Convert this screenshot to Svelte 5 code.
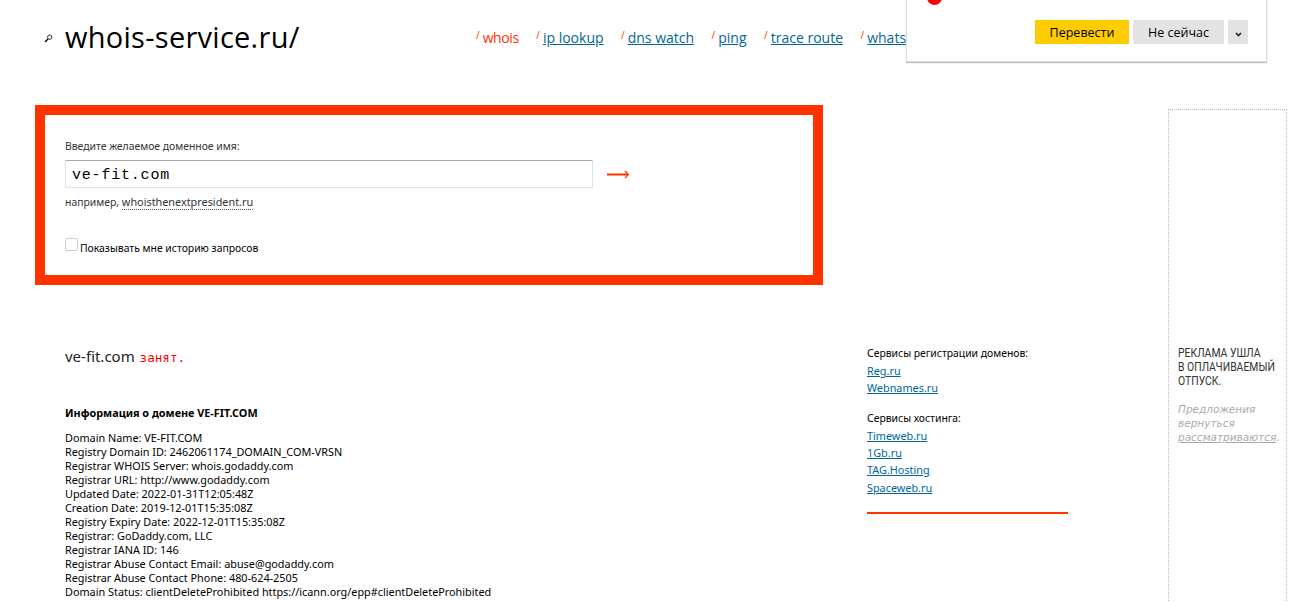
<script lang="ts">
	const nav = [
		{ label: 'whois', active: true },
		{ label: 'ip lookup' },
		{ label: 'dns watch' },
		{ label: 'ping' },
		{ label: 'trace route' },
		{ label: 'whatsmyip' }
	];

	const registrars = ['Reg.ru', 'Webnames.ru'];
	const hosting = ['Timeweb.ru', '1Gb.ru', 'TAG.Hosting', 'Spaceweb.ru'];

	const whois = [
		'Domain Name: VE-FIT.COM',
		'Registry Domain ID: 2462061174_DOMAIN_COM-VRSN',
		'Registrar WHOIS Server: whois.godaddy.com',
		'Registrar URL: http://www.godaddy.com',
		'Updated Date: 2022-01-31T12:05:48Z',
		'Creation Date: 2019-12-01T15:35:08Z',
		'Registry Expiry Date: 2022-12-01T15:35:08Z',
		'Registrar: GoDaddy.com, LLC',
		'Registrar IANA ID: 146',
		'Registrar Abuse Contact Email: abuse@godaddy.com',
		'Registrar Abuse Contact Phone: 480-624-2505',
		'Domain Status: clientDeleteProhibited https://icann.org/epp#clientDeleteProhibited'
	];
</script>

<div class="page">
	<header class="header">
		<svg class="lens" width="9" height="9" viewBox="0 0 9 9" aria-hidden="true">
			<circle cx="5.7" cy="3.2" r="2.2" fill="none" stroke="#333" stroke-width="1" />
			<path d="M4 5 L1 8" stroke="#000" stroke-width="1.4" />
		</svg>
		<div class="logo">whois-service.ru/</div>
		<nav class="nav">
			{#each nav as item}
				<span class="nav-item">
					<span class="tick">/</span>{#if item.active}<span class="current">{item.label}</span>{:else}<a href="#top">{item.label}</a>{/if}
				</span>
			{/each}
		</nav>
	</header>

	<div class="columns">
		<main class="left">
			<form class="search">
				<label class="field-label" for="domain">Введите желаемое доменное имя:</label>
				<div class="field-row">
					<input id="domain" class="domain" type="text" value="ve-fit.com" />
					<svg class="go" width="22" height="9" viewBox="0 0 22 9" aria-hidden="true">
						<path d="M0 4.5 H21" stroke="#ff3300" stroke-width="2" />
						<path d="M18 1 L21.5 4.5 L18 8" fill="none" stroke="#ff3300" stroke-width="1.2" />
					</svg>
				</div>
				<p class="hint"><span class="ru">например,</span> <span class="sample">whoisthenextpresident.ru</span></p>
				<label class="history"><span class="box"></span><span class="history-text">Показывать мне историю запросов</span></label>
			</form>

			<section class="result">
				<p class="status">ve-fit.com <span class="taken">занят.</span></p>
				<h4>Информация о домене VE-FIT.COM</h4>
				<div class="whois">
					{#each whois as line}
						<div>{line}</div>
					{/each}
				</div>
			</section>
		</main>

		<aside class="services">
			<p>Сервисы регистрации доменов:</p>
			{#each registrars as name}
				<a href="#top">{name}</a>
			{/each}
			<p class="second">Сервисы хостинга:</p>
			{#each hosting as name}
				<a href="#top">{name}</a>
			{/each}
			<hr />
		</aside>

		<aside class="ad">
			<div class="ad-title">РЕКЛАМА УШЛА<br />В ОПЛАЧИВАЕМЫЙ<br />ОТПУСК.</div>
			<div class="ad-note">Предложения вернуться <span class="ad-link">рассматриваются</span>.</div>
		</aside>
	</div>

	<div class="translate">
		<span class="dot"></span>
		<div class="actions">
			<button class="primary">Перевести</button>
			<button>Не сейчас</button>
			<button class="more" aria-label="Ещё">
				<svg width="7" height="5" viewBox="0 0 7 5"><path d="M1 1 L3.5 3.5 L6 1" fill="none" stroke="#222" stroke-width="1.6" /></svg>
			</button>
		</div>
	</div>
</div>

<style>
	:global(body) {
		overflow: hidden;
		background: #fff;
	}

	.page {
		position: relative;
		height: 602px;
		overflow: hidden;
		font-family: "Noto Sans", sans-serif;
		font-size: 10.85px;
		color: #000;
	}

	.header {
		display: flex;
		align-items: center;
		height: 73px;
		padding-left: 44px;
		white-space: nowrap;
	}

	.lens {
		margin: 4px 12px 0 0;
	}

	.logo {
		width: 411px;
		font-family: "Open Sans", sans-serif;
		font-size: 29px;
		letter-spacing: 0.27px;
		color: #000;
	}

	.nav {
		display: flex;
		gap: 17.5px;
		margin-top: 2px;
		font-size: 14px;
		font-family: "Open Sans", sans-serif;
	}

	.tick {
		margin-right: 3px;
		font-size: 10px;
		vertical-align: 4px;
		color: #ff3300;
	}

	.current {
		letter-spacing: -0.4px;
		color: #ff3300;
	}

	a {
		color: #006699;
	}

	.columns {
		display: flex;
		padding: 32px 0 0 35px;
	}

	.left {
		flex: none;
		width: 788px;
	}

	.search {
		box-sizing: border-box;
		height: 180px;
		padding: 21px 20px 0;
		border: 10px solid #ff3300;
		color: #333;
	}

	.field-label {
		display: block;
		height: 24px;
		font-size: 10.4px;
		line-height: 20px;
	}

	.field-row {
		display: flex;
		align-items: center;
		gap: 14px;
	}

	.domain {
		box-sizing: border-box;
		width: 528px;
		height: 28px;
		padding: 2px 6px 0;
		border: 1px solid #e2e2e2;
		border-top-color: #aaa;
		font-family: "Liberation Mono", monospace;
		font-size: 15px;
		letter-spacing: 0.8px;
		color: #000;
		outline: none;
	}

	.hint {
		margin: 7px 0 0;
		line-height: 14px;
	}

	.ru {
		font-size: 10.4px;
	}

	.sample {
		border-bottom: 1px dotted #555;
	}

	.history {
		display: flex;
		align-items: flex-start;
		margin-top: 29px;
		color: #000;
	}

	.history-text {
		margin-top: 3px;
		font-size: 10.4px;
		line-height: 14px;
	}

	.box {
		box-sizing: border-box;
		width: 13px;
		height: 13px;
		margin-right: 2px;
		border: 1px solid #ccc;
		border-radius: 2px;
	}

	.result {
		padding: 63px 0 0 30px;
	}

	.status {
		margin: 0;
		font-size: 15px;
		line-height: 16px;
		color: #222;
		word-spacing: 1px;
	}

	.taken {
		color: #ff0000;
		font-family: "DejaVu Sans Mono", monospace;
		font-size: 12.6px;
	}

	h4 {
		margin: 40px 0 11px;
		font-size: 10.85px;
		line-height: 14px;
	}

	.whois {
		line-height: 14px;
		white-space: nowrap;
	}

	.services {
		flex: none;
		display: flex;
		flex-direction: column;
		align-items: flex-start;
		width: 201px;
		margin: 241px 0 0 44px;
		line-height: 17.33px;
	}

	.services p {
		margin: 0 0 2px;
		font-size: 10.4px;
		line-height: 14px;
	}

	.services .second {
		margin: 14px 0 2px;
	}

	hr {
		align-self: stretch;
		height: 2px;
		margin: 16px 0 0;
		border: 0;
		background: #ff3300;
	}

	.ad {
		box-sizing: border-box;
		flex: none;
		width: 119px;
		height: 520px;
		margin: 4px 0 0 100px;
		padding: 236px 4px 0 9px;
		border: 1px dotted #bbb;
	}

	.ad-title {
		font-family: "Roboto", sans-serif;
		font-size: 13px;
		line-height: 14px;
		white-space: nowrap;
		color: #333;
		transform: scaleX(0.8);
		transform-origin: left top;
	}

	.ad-note {
		margin-top: 14px;
		font-family: "DejaVu Sans", sans-serif;
		font-size: 10.5px;
		font-style: italic;
		line-height: 14px;
		color: #aaa;
	}

	.ad-link {
		text-decoration: underline;
	}

	.translate {
		position: absolute;
		top: -21px;
		left: 906px;
		box-sizing: border-box;
		width: 361px;
		height: 83px;
		padding: 40px 18px 0;
		background: #fff;
		border: 1px solid #ddd;
		box-shadow: 0 1px 1px #bbb;
	}

	.dot {
		position: absolute;
		top: 16px;
		left: 20px;
		width: 15px;
		height: 9px;
		border-radius: 0 0 8px 8px;
		background: #ff0000;
	}

	.actions {
		display: flex;
		justify-content: flex-end;
		gap: 4px;
	}

	button {
		height: 24px;
		width: 91px;
		padding: 0;
		border: 0;
		border-radius: 2px;
		background: #e3e3e5;
		font-family: "Open Sans", sans-serif;
		font-size: 12.5px;
		color: #000;
	}

	.primary {
		width: 94px;
		border-radius: 0;
		background: #ffcc00;
	}

	.more {
		width: 20px;
	}
</style>
